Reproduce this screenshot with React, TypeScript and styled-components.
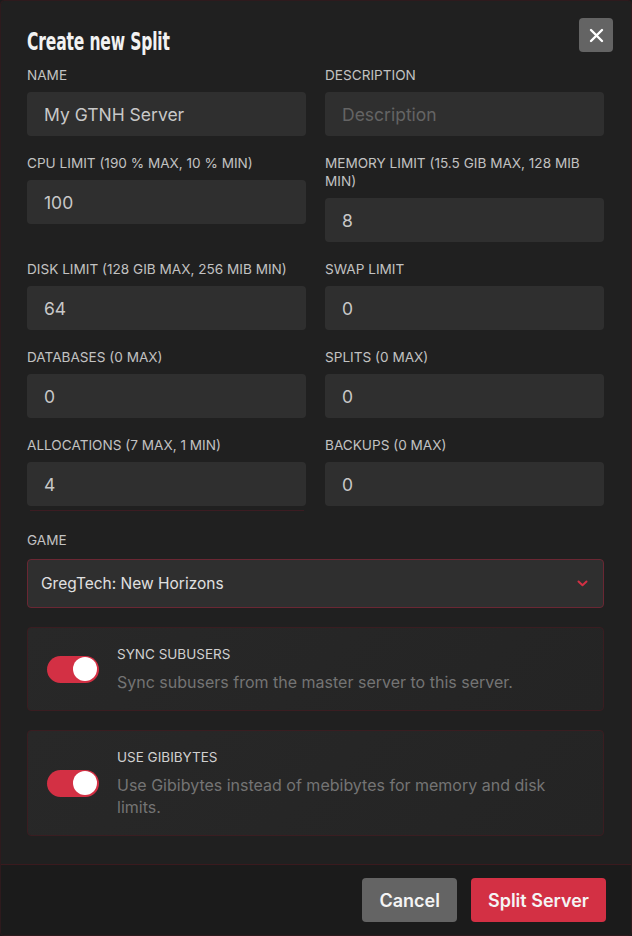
import styled, { createGlobalStyle } from "styled-components";

const Global = createGlobalStyle`
  html, body {
    margin: 0;
    padding: 0;
    background: #1b1b1b;
  }
  * { box-sizing: border-box; }
  #root { height: 936px; }
`;

const Modal = styled.div`
  height: 936px;
  display: flex;
  flex-direction: column;
  background: #202020;
  border: 1px solid #2e1a1d;
  border-radius: 4px;
  font-family: Inter, "Noto Sans", sans-serif;
  overflow: hidden;
`;

const Body = styled.div`
  flex: 1;
  padding: 17px 18px 0 26px;
`;

const Header = styled.div`
  display: flex;
  justify-content: space-between;
  align-items: flex-start;
`;

const Title = styled.h1`
  margin: 10px 0 0 0;
  font-family: "DejaVu Sans Condensed", "Liberation Sans", sans-serif;
  font-weight: 700;
  font-size: 25px;
  line-height: 28px;
  letter-spacing: -0.2px;
  color: #f2f2f2;
  white-space: nowrap;
  transform: scaleX(0.69);
  transform-origin: left center;
`;

const CloseButton = styled.button`
  width: 34px;
  height: 34px;
  border: none;
  border-radius: 4px;
  background: #646464;
  display: flex;
  align-items: center;
  justify-content: center;
  padding: 0;
  cursor: pointer;
`;

const Form = styled.div`
  padding-right: 9px;
`;

const Grid = styled.div`
  display: grid;
  grid-template-columns: 1fr 1fr;
  column-gap: 19px;
  row-gap: 18px;
  margin-top: 10px;
  align-items: start;
`;

const Field = styled.div`
  display: flex;
  flex-direction: column;
`;

const Label = styled.label`
  font-size: 13.6px;
  line-height: 18px;
  color: #c2c2c2;
  text-transform: uppercase;
  margin-bottom: 8px;
`;

const Input = styled.input`
  height: 44px;
  width: 100%;
  border: none;
  outline: none;
  border-radius: 4px;
  background: #2f2f2f;
  padding: 0 17px;
  font-family: Inter, "Noto Sans", sans-serif;
  font-size: 17.5px;
  color: #c8c8c8;
  &::placeholder {
    color: #646464;
  }
`;

const Underline = styled.div`
  height: 1px;
  margin: 4px 2px 0 3px;
  background: #3c1c22;
`;

const GameField = styled(Field)`
  margin-top: 20px;
`;

const Select = styled.div`
  height: 49px;
  border: 1px solid #6a2733;
  border-radius: 4px;
  background: #2f2f2f;
  display: flex;
  align-items: center;
  justify-content: space-between;
  padding: 0 15px 0 13px;
  font-size: 15.5px;
  color: #e0e0e0;
  margin-top: 2px;
`;

const Card = styled.div`
  margin-top: 19px;
  display: flex;
  align-items: center;
  gap: 18px;
  padding: 17px 20px 17px 19px;
  border: 1px solid #3a1d21;
  border-radius: 4px;
  background: linear-gradient(135deg, #282828 0%, #242424 100%);
`;

const Toggle = styled.div<{ $on: boolean }>`
  flex: none;
  width: 52px;
  height: 27px;
  border-radius: 14px;
  background: ${(p) => (p.$on ? "#d33044" : "#4a4a4a")};
  display: flex;
  align-items: center;
  justify-content: ${(p) => (p.$on ? "flex-end" : "flex-start")};
  padding: 0 2px;
`;

const Knob = styled.div`
  width: 24px;
  height: 24px;
  border-radius: 50%;
  background: #ffffff;
`;

const CardText = styled.div`
  display: flex;
  flex-direction: column;
  gap: 8px;
`;

const CardTitle = styled.div`
  font-size: 13.5px;
  line-height: 18px;
  color: #d0d0d0;
  text-transform: uppercase;
`;

const CardDesc = styled.div`
  font-size: 16px;
  line-height: 22px;
  color: #747474;
`;

const Footer = styled.div`
  height: 71px;
  flex: none;
  display: flex;
  justify-content: flex-end;
  align-items: center;
  gap: 14px;
  padding: 0 25px 0 0;
  background: #1b1b1b;
  border-top: 1px solid #3a1a1e;
`;

const Button = styled.button<{ $primary?: boolean }>`
  height: 44px;
  border: none;
  border-radius: 4px;
  padding: 0 17px;
  background: ${(p) => (p.$primary ? "#d33044" : "#646464")};
  color: #f4f4f4;
  font-family: Inter, "Noto Sans", sans-serif;
  font-size: 18px;
  font-weight: 600;
  cursor: pointer;
`;

const fields: { label: string; value?: string; placeholder?: string; underline?: boolean }[] = [
  { label: "Name", value: "My GTNH Server" },
  { label: "Description", placeholder: "Description" },
  { label: "CPU Limit (190 % max, 10 % min)", value: "100" },
  { label: "Memory Limit (15.5 GiB max, 128 MiB min)", value: "8" },
  { label: "Disk Limit (128 GiB max, 256 MiB min)", value: "64" },
  { label: "Swap Limit", value: "0" },
  { label: "Databases (0 max)", value: "0" },
  { label: "Splits (0 max)", value: "0" },
  { label: "Allocations (7 max, 1 min)", value: "4", underline: true },
  { label: "Backups (0 max)", value: "0" },
];

const toggles = [
  { title: "Sync subusers", desc: "Sync subusers from the master server to this server." },
  { title: "Use Gibibytes", desc: "Use Gibibytes instead of mebibytes for memory and disk limits." },
];

const App = () => {
  return (
    <>
      <Global />
      <Modal>
        <Body>
          <Header>
            <Title>Create new Split</Title>
            <CloseButton aria-label="Close">
              <svg width="15" height="15" viewBox="0 0 15 15">
                <path d="M2 2 L13 13 M13 2 L2 13" stroke="#ffffff" strokeWidth="2.4" strokeLinecap="round" />
              </svg>
            </CloseButton>
          </Header>
          <Form>
            <Grid>
              {fields.map((f) => (
                <Field key={f.label}>
                  <Label>{f.label}</Label>
                  <Input defaultValue={f.value} placeholder={f.placeholder} />
                  {f.underline && <Underline />}
                </Field>
              ))}
            </Grid>
            <GameField>
              <Label>Game</Label>
              <Select>
                <span>GregTech: New Horizons</span>
                <svg width="11" height="7" viewBox="0 0 11 7">
                  <path d="M1.5 1.5 L5.5 5.2 L9.5 1.5" stroke="#d33044" strokeWidth="2" fill="none" strokeLinecap="round" strokeLinejoin="round" />
                </svg>
              </Select>
            </GameField>
            {toggles.map((t) => (
              <Card key={t.title}>
                <Toggle $on>
                  <Knob />
                </Toggle>
                <CardText>
                  <CardTitle>{t.title}</CardTitle>
                  <CardDesc>{t.desc}</CardDesc>
                </CardText>
              </Card>
            ))}
          </Form>
        </Body>
        <Footer>
          <Button>Cancel</Button>
          <Button $primary>Split Server</Button>
        </Footer>
      </Modal>
    </>
  );
};

export default App;
